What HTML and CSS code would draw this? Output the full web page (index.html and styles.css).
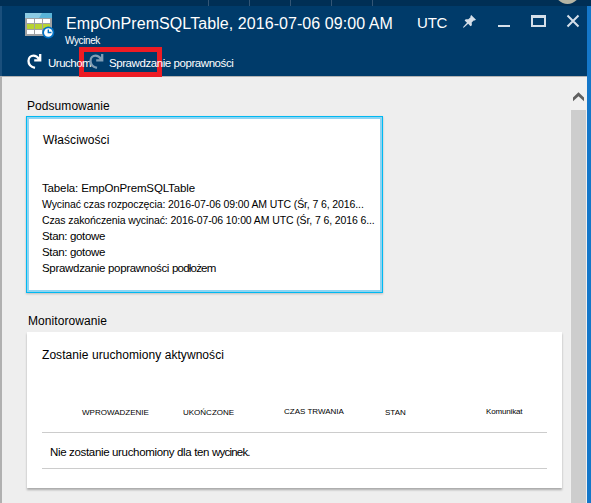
FILE: index.html
```html
<!DOCTYPE html>
<html lang="pl">
<head>
<meta charset="utf-8">
<title>EmpOnPremSQLTable</title>
<link rel="stylesheet" href="styles.css">
</head>
<body>
<div class="topbar"><i></i><i></i><i></i><i></i><i></i><span class="avatar"></span></div>
<div class="blade">
  <header class="header">
    <div class="heading">
      <svg class="table-icon" width="30" height="28" viewBox="0 0 30 28">
        <path fill="#a0a1a2" d="M0 0h27v23H0z"/>
        <path fill="#59b4d9" d="M0 0h27v5H0z"/>
        <path fill="#8ccbe4" d="M0 0h17l-3 5H0z"/>
        <path fill="#fff" d="M2 6h7v4H2zM10 6h7v4h-7zM18 6h7v4h-7zM2 17h7v4H2zM10 17h7v4h-7z"/>
        <path fill="#b8d432" d="M2 11h7v5H2zM10 11h7v5h-7zM18 11h7v5h-7z"/>
        <circle cx="23.3" cy="19.5" r="6" fill="#0072c6"/>
        <circle cx="23.3" cy="19.5" r="4.3" fill="#fff"/>
        <path d="M23.3 16.5v3h3.2" fill="none" stroke="#0072c6" stroke-width="1.4"/>
      </svg>
      <div class="titles">
        <h1>EmpOnPremSQLTable, 2016-07-06 09:00 AM</h1>
        <p>Wycinek</p>
      </div>
      <span class="utc">UTC</span>
      <svg class="controls" width="118" height="16" viewBox="0 0 118 16">
        <path fill="#d5dfe9" d="M9.2 1 14 5.800l-1.400.8-.9-.1-2 2.100.2 2.600-1.400 1.100-2.300-2.500L2 13.600l-1 .2.300-1L5 8.700 2.600 6.500l1.100-1.300 2.600.1 2.200-2-.1-1.100z"/>
        <path fill="#d5dfe9" d="M36 11h12v2H36z"/>
        <path fill="#d5dfe9" fill-rule="evenodd" d="M69 1h15v12H69zM71 4v7h11V4z"/>
        <path d="m105.500 1.500 11 11m0-11-11 11" fill="none" stroke="#d5dfe9" stroke-width="2"/>
      </svg>
    </div>
    <div class="toolbar">
      <svg class="redo" width="16" height="17" viewBox="0 0 16 17"><path d="M8 14.800C4 13.800 1.500 11.200 1.500 7.900 1.500 4.700 3.800 2.700 6.500 2.700 9.200 2.700 10.800 4.300 12.300 6.300M13.200 1v6.300H7.200" fill="none" stroke="#fff" stroke-width="2.300"/></svg>
      <span class="run">Uruchom</span>
      <svg class="redo dim" width="16" height="17" viewBox="0 0 16 17"><path d="M8 14.800C4 13.800 1.500 11.200 1.500 7.900 1.500 4.700 3.800 2.700 6.500 2.700 9.200 2.700 10.800 4.300 12.300 6.300M13.200 1v6.300H7.200" fill="none" stroke="#7f9db5" stroke-width="2.300"/></svg>
      <span class="validate">Sprawdzanie poprawności</span>
      <span class="highlight"></span>
    </div>
  </header>
  <div class="body">
    <main class="content">
      <h2 class="summary-label">Podsumowanie</h2>
      <section class="card summary">
        <h3>Właściwości</h3>
        <p class="table-name">Tabela: EmpOnPremSQLTable</p>
        <p class="time">Wycinać czas rozpoczęcia: 2016-07-06 09:00 AM UTC (Śr, 7 6, 2016...</p>
        <p class="time">Czas zakończenia wycinać: 2016-07-06 10:00 AM UTC (Śr, 7 6, 2016 6...</p>
        <p class="state">Stan: gotowe</p>
        <p class="state">Stan: gotowe</p>
        <p class="upstream">Sprawdzanie poprawności <span class="tight">podłożem</span></p>
      </section>
      <h2 class="monitor-label">Monitorowanie</h2>
      <section class="card monitor">
        <h3>Zostanie uruchomiony aktywności</h3>
        <div class="columns"><span>WPROWADZENIE</span><span>UKOŃCZONE</span><span class="raised">CZAS TRWANIA</span><span>STAN</span><span class="raised message">Komunikat</span></div>
        <div class="empty">Nie zostanie uruchomiony dla ten <span class="tight">wycinek.</span></div>
      </section>
    </main>
    <div class="scrollbar">
      <svg width="12" height="10" viewBox="0 0 12 10"><path d="m0 5.500 5.500-5.200L11 5.500v3.800L5.500 4.200 0 9.300z" fill="#606060"/></svg>
      <div class="thumb"></div>
    </div>
  </div>
</div>
</body>
</html>
```
FILE: styles.css
```css
* { box-sizing: border-box; margin: 0; padding: 0; }
body { width: 591px; height: 503px; overflow: hidden; background: #1477c9; font: 12px/16px "Liberation Sans", Arial, sans-serif; color: #000; display: flex; flex-direction: column; }
h1, h2, h3 { font-weight: normal; }
span, p, h1, h2, h3 { white-space: nowrap; }

.topbar { height: 6px; flex: none; background: #002f55; display: flex; padding-left: 208px; gap: 40px; position: relative; overflow: hidden; }
.topbar i { width: 1px; background: #335676; }
.avatar { position: absolute; left: 555px; top: -21px; width: 25px; height: 25px; border-radius: 50%; background: #b5b5a4; }

.blade { width: 587px; flex: 1; display: flex; flex-direction: column; }
.header { height: 70px; flex: none; background: #003b6a; border-left: 2px solid #1a4f7c; }
.heading { height: 46px; display: flex; align-items: flex-start; }
.table-icon { margin: 7px 0 0 23px; flex: none; }
.titles { width: 354px; margin-left: 8px; padding-top: 8px; color: #fff; }
.titles h1 { font-size: 16px; line-height: 20px; letter-spacing: .07px; padding-left: 3px; }
.titles p { font-size: 10px; line-height: 13px; letter-spacing: -.4px; padding-left: 2px; }
.utc { width: 46px; margin-top: 7px; color: #fff; font-size: 15px; line-height: 20px; letter-spacing: -.2px; }
.controls { margin: 8px 0 0 -1px; flex: none; }
.toolbar { height: 24px; display: flex; position: relative; color: #fff; padding-left: 25px; font-size: 11.5px; line-height: 16px; }
.toolbar > * { flex: none; }
.redo { z-index: 1; margin-top: 1px; }
.run { width: 41px; margin: 3px 0 0 5px; letter-spacing: -.5px; z-index: 1; }
.validate { margin: 3px 0 0 4px; letter-spacing: -.43px; z-index: 1; }
.highlight { position: absolute; left: 77px; top: -5px; width: 83px; height: 30px; border: 5px solid #ed1c24; }

.body { flex: 1; display: flex; background: #eee; border-left: 2px solid #b0b0b0; border-top: 1px solid #b3b3b3; }
.content { width: 568px; padding: 21px 0 0 24px; }
.summary-label { font-size: 12px; line-height: 16px; letter-spacing: .06px; padding-left: 1px; }
.card { background: #fff; }
.summary { width: 357px; height: 177px; margin-top: 2px; border: 1px solid #00b9f2; box-shadow: inset 0 0 0 2px #8ed4f2, 0 1px 2px #bbb; padding: 15px 0 0 15px; }
.summary h3 { font-size: 12px; padding-left: 1px; letter-spacing: .1px; }
.table-name { margin-top: 32px; letter-spacing: -.14px; font-size: 11.5px; }
.time { font-size: 10.5px; letter-spacing: -.11px; }
.state { font-size: 11.5px; letter-spacing: -.35px; }
.upstream { font-size: 11.5px; letter-spacing: -.31px; }
.tight { letter-spacing: -.8px; }
.monitor-label { font-size: 12px; margin-top: 20px; padding-left: 2px; letter-spacing: .08px; }
.monitor { width: 535px; height: 156px; margin: 3px 0 0 1px; padding: 15px 15px 0; box-shadow: 0 2px 2px #aaa; }
.monitor h3 { font-size: 12px; letter-spacing: .06px; }
.columns { height: 70px; padding: 42px 0 0 40px; display: grid; grid-template-columns: repeat(5, 101px); font-size: 8px; line-height: 16px; border-bottom: 1px solid #ccc; }
.raised { margin-top: -1px; }
.message { letter-spacing: -.15px; }
.empty { height: 36px; padding: 11px 0 0 8px; font-size: 11.5px; letter-spacing: -.34px; border-bottom: 1px solid #ccc; }

.scrollbar { width: 17px; background: #f0f0f0; display: flex; flex-direction: column; }
.scrollbar svg { margin: 15px 0 0 3px; flex: none; }
.thumb { width: 15px; margin: 8px 0 0 1px; flex: 1; background: #cdcdcd; }
```
